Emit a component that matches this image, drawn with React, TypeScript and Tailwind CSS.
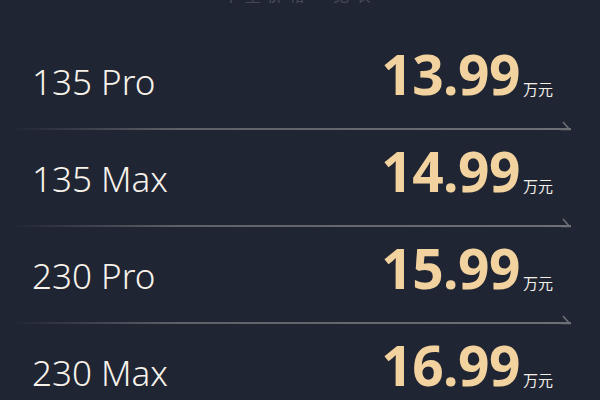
const rows = [
  { name: "135 Pro", price: "13.99" },
  { name: "135 Max", price: "14.99" },
  { name: "230 Pro", price: "15.99" },
  { name: "230 Max", price: "16.99" },
];

function Divider() {
  return (
    <div className="relative mx-[10px] mr-[29px] h-[10px]">
      <div className="absolute left-0 right-0 bottom-[1px] h-[2px] bg-gradient-to-r from-transparent via-[#5f6168] via-30% to-[#6e7076]" />
      <svg
        className="absolute right-0 bottom-0"
        width="10"
        height="10"
        viewBox="0 0 10 10"
      >
        <path d="M2 1 L8.5 8.5 L0 8.5" fill="none" stroke="#6e7076" strokeWidth="1.6" />
      </svg>
    </div>
  );
}

export default function App() {
  return (
    <div className="w-[600px] h-[400px] overflow-hidden bg-[#202533] font-['Noto_Sans',sans-serif]">
      <div className="-mt-[14px] h-[18px] text-center text-[16px] leading-[18px] text-[#4b505c] tracking-[6px]">
        车型价格一览表
      </div>
      <div className="pt-[42px]">
        {rows.map((r, i) => (
          <div key={r.name}>
            <div className="flex items-baseline justify-between pl-[32px] pr-[47px] h-[60px]">
              <span className="text-[35px] font-light text-[#f7f2ea] leading-none">
                {r.name}
              </span>
              <span className="flex items-baseline">
                <span className="text-[55px] font-bold text-[#f2d29e] leading-none tracking-[-0.5px]">
                  {r.price}
                </span>
                <span className="ml-[3px] text-[15px] text-[#f2efe9] font-['Noto_Sans_CJK_SC',sans-serif]">
                  万元
                </span>
              </span>
            </div>
            {i < rows.length - 1 && (
              <div className="pt-[15px] pb-[12px]">
                <Divider />
              </div>
            )}
          </div>
        ))}
      </div>
    </div>
  );
}
